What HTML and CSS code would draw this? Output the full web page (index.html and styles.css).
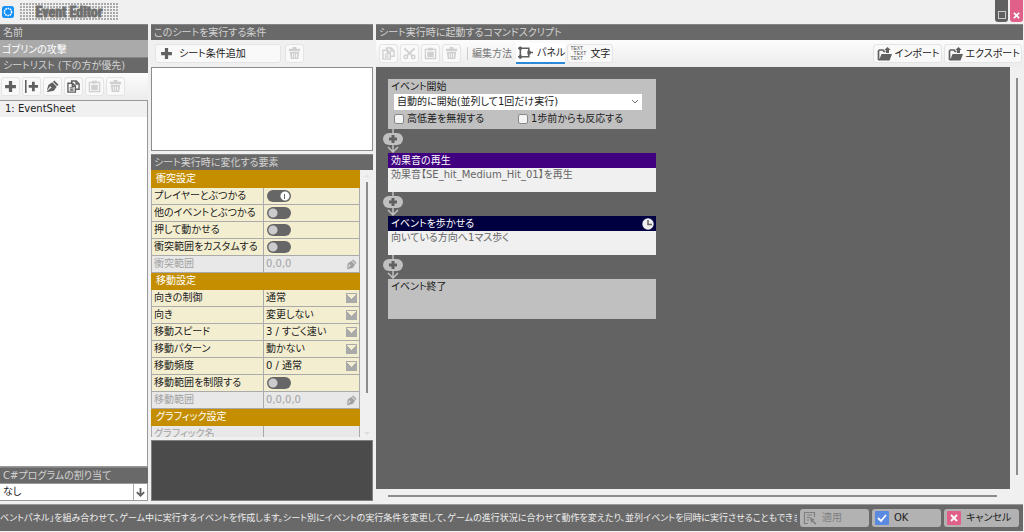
FILE: index.html
```html
<!DOCTYPE html>
<html lang="ja">
<head>
<meta charset="utf-8">
<title>Event Editor</title>
<link rel="stylesheet" href="styles.css">
</head>
<body>
<svg class="defs" aria-hidden="true">
  <symbol id="plus" viewBox="0 0 12 12"><path d="M4.500 1h3v3.500H11v3H7.500V11h-3V7.500H1v-3h3.500z"/></symbol>
  <symbol id="insert" viewBox="0 0 14 14"><path d="M0 0h1.700v14H0zM7.500 2h3v3.300H14v3h-3.500V12h-3V8.300H4v-3h3.500z"/></symbol>
  <symbol id="pen" viewBox="0 0 14 14"><path d="M9 .5 13.500 5 12 6.500 7.500 2zM6.800 2.500l4.700 4.700L8.500 11.500 1.500 13l-.5-.5 3.500-3.500a1 1 0 1 0-.8-.8L.8 11.500 2.500 5.500z"/></symbol>
  <symbol id="copy" viewBox="0 0 14 14"><path d="M5 3V1h5l3 3v6H9.500M9.700 1v3.300H13M1 3.500h5l3 3V13H1zM5.700 3.500v3.300H9M3 8.500h4M3 10.700h4" fill="none" stroke="currentColor" stroke-width="1.500"/></symbol>
  <symbol id="cut" viewBox="0 0 14 14"><path d="m1.500 1.500 8.500 8M12.500 1.500 4 9.500" fill="none" stroke="currentColor" stroke-width="2"/><circle cx="3" cy="10.800" r="1.900" fill="none" stroke="currentColor" stroke-width="1.500"/><circle cx="11" cy="10.800" r="1.900" fill="none" stroke="currentColor" stroke-width="1.500"/></symbol>
  <symbol id="paste" viewBox="0 0 14 14"><path d="M1.500 2.500h11v10h-11z" fill="none" stroke="currentColor" stroke-width="1.500"/><path d="M4.500.8h5v3h-5zM3.500 5h7v6h-7z"/></symbol>
  <symbol id="trash" viewBox="0 0 14 14"><path d="M5 0h4v2h4v2.500H1V2h4zM2 5.500h10L11 13H3zM4.300 7l.4 4.500h.8L5.300 7zm2.300 0v4.500h.8V7zm2.200 0-.2 4.500h.8L9.800 7z" fill-rule="evenodd"/></symbol>
  <symbol id="folder" viewBox="0 0 15 14"><path d="M3 12.500H1.500V4l1-1H6l1 1.500h1.500" fill="none" stroke="currentColor" stroke-width="1.700"/><path d="M4.500 7H15l-2.500 6.500H2zM10.500 0l3.200 3H12v3H9V3H7.300z"/></symbol>
  <symbol id="flow" viewBox="0 0 16 14"><path d="M2.500 0v13M0 2h11.500v9H0M11.500 6.500H16" fill="none" stroke="currentColor" stroke-width="1.700"/><path d="M1 .5h3v3H1zM1 9.500h3v3H1zM10 4.500h3.500v4H10z"/></symbol>
  <symbol id="down" viewBox="0 0 12 12"><path d="M6 1v9M2 5.500l4 4 4-4" fill="none" stroke="currentColor" stroke-width="2"/></symbol>
</svg>

<header class="titlebar">
  <svg class="app-icon" viewBox="0 0 12 12" aria-hidden="true"><rect width="12" height="12" rx="2.500" fill="#1590f5"/><circle cx="6" cy="6" r="3.600" fill="none" stroke="#fff" stroke-width="1.500" stroke-dasharray="1.600 .7"/></svg>
  <h1 class="app-name"><span>Event Editor</span></h1>
  <div class="window-buttons">
    <button class="win max" aria-label="最大化"><span></span></button>
    <button class="win close" aria-label="閉じる"><svg viewBox="0 0 8 8"><path d="m1 1 6 6M7 1 1 7" stroke="#fff" stroke-width="2"/></svg></button>
  </div>
</header>

<main class="workspace">
  <section class="col sheets">
    <label class="bar" for="name">名前</label>
    <input class="name" id="name" value="ゴブリンの攻撃">
    <h2 class="bar">シートリスト (下の方が優先)</h2>
    <div class="tools">
      <button class="tool" aria-label="追加"><svg><use href="#plus"/></svg></button>
      <button class="tool" aria-label="挿入"><svg><use href="#insert"/></svg></button>
      <button class="tool" aria-label="編集"><svg><use href="#pen"/></svg></button>
      <button class="tool" aria-label="コピー"><svg><use href="#copy"/></svg></button>
      <button class="tool" aria-label="貼り付け" disabled><svg><use href="#paste"/></svg></button>
      <button class="tool" aria-label="削除" disabled><svg><use href="#trash"/></svg></button>
    </div>
    <ul class="sheet-list"><li>1: EventSheet</li></ul>
    <label class="bar" for="program">C#プログラムの割り当て</label>
    <div class="program">
      <select id="program"><option>なし</option></select>
      <svg aria-hidden="true"><use href="#down"/></svg>
    </div>
  </section>

  <section class="col conditions">
    <h2 class="bar">このシートを実行する条件</h2>
    <div class="tools indent">
      <button class="tool add"><svg><use href="#plus"/></svg>シート条件追加</button>
      <button class="tool" aria-label="条件を削除" disabled><svg><use href="#trash"/></svg></button>
    </div>
    <div class="condition-box"></div>
    <h2 class="bar">シート実行時に変化する要素</h2>
    <div class="props">
      <table>
        <colgroup><col class="key"><col></colgroup>
        <tbody>
        <tr><th class="group" colspan="2">衝突設定</th></tr>
        <tr><th><label for="t1">プレイヤーとぶつかる</label></th><td><input class="switch" type="checkbox" id="t1" checked></td></tr>
        <tr><th><label for="t2">他のイベントとぶつかる</label></th><td><input class="switch" type="checkbox" id="t2"></td></tr>
        <tr><th><label for="t3">押して動かせる</label></th><td><input class="switch" type="checkbox" id="t3"></td></tr>
        <tr><th><label for="t4">衝突範囲をカスタムする</label></th><td><input class="switch" type="checkbox" id="t4"></td></tr>
        <tr class="off"><th>衝突範囲</th><td><div class="cell">0,0,0<svg><use href="#pen"/></svg></div></td></tr>
        <tr><th class="group" colspan="2">移動設定</th></tr>
        <tr><th><label for="s1">向きの制御</label></th><td><select class="pick" id="s1"><option>通常</option></select></td></tr>
        <tr><th><label for="s2">向き</label></th><td><select class="pick" id="s2"><option>変更しない</option></select></td></tr>
        <tr><th><label for="s3">移動スピード</label></th><td><select class="pick" id="s3"><option>3 / すごく速い</option></select></td></tr>
        <tr><th><label for="s4">移動パターン</label></th><td><select class="pick" id="s4"><option>動かない</option></select></td></tr>
        <tr><th><label for="s5">移動頻度</label></th><td><select class="pick" id="s5"><option>0 / 通常</option></select></td></tr>
        <tr><th><label for="t5">移動範囲を制限する</label></th><td><input class="switch" type="checkbox" id="t5"></td></tr>
        <tr class="off"><th>移動範囲</th><td><div class="cell">0,0,0,0<svg><use href="#pen"/></svg></div></td></tr>
        <tr><th class="group" colspan="2">グラフィック設定</th></tr>
        <tr class="off"><th>グラフィック名</th><td></td></tr>
        </tbody>
      </table>
      <div class="props-scroll"><i class="up"></i><i class="thumb"></i><i class="dn"></i></div>
    </div>
    <div class="preview"></div>
  </section>

  <section class="col script">
    <h2 class="bar">シート実行時に起動するコマンドスクリプト</h2>
    <div class="tools script-tools">
      <button class="tool" aria-label="コピー" disabled><svg><use href="#copy"/></svg></button>
      <button class="tool" aria-label="切り取り" disabled><svg><use href="#cut"/></svg></button>
      <button class="tool" aria-label="貼り付け" disabled><svg><use href="#paste"/></svg></button>
      <button class="tool" aria-label="削除" disabled><svg><use href="#trash"/></svg></button>
      <span class="mode-label">編集方法</span>
      <button class="tool mode active"><svg class="wide"><use href="#flow"/></svg>パネル</button>
      <button class="tool mode"><span class="text-icon" aria-hidden="true"><span>TEXT</span><span>TEXT</span><span>TEXT</span></span>文字</button>
      <span class="spacer"></span>
      <button class="tool file"><svg class="wide"><use href="#folder"/></svg>インポート</button>
      <button class="tool file"><svg class="wide"><use href="#folder"/></svg>エクスポート</button>
    </div>
    <div class="canvas">
      <article class="panel start">
        <h3><label for="trigger">イベント開始</label></h3>
        <div class="trigger">
          <select id="trigger"><option>自動的に開始(並列して1回だけ実行)</option></select>
          <svg viewBox="0 0 8 6" aria-hidden="true"><path d="m1 1 3 3 3-3" fill="none" stroke="#777"/></svg>
        </div>
        <div class="checks">
          <label><input type="checkbox">高低差を無視する</label>
          <label><input type="checkbox">1歩前からも反応する</label>
        </div>
      </article>
      <button class="link" aria-label="コマンドを追加"><svg viewBox="0 0 22 24"><path d="M11 0v23M6 18l5 5 5-5" fill="none" stroke="#c0c0c0" stroke-width="1.500"/><rect x="1" y="4" width="20" height="12" rx="6" fill="#c0c0c0"/><path d="M9.500 6h3v2.500H15v3h-2.500V14h-3v-2.500H7v-3h2.500z" fill="#606060"/></svg></button>
      <article class="panel command sound">
        <h3>効果音の再生</h3>
        <p>効果音【SE_hit_Medium_Hit_01】を再生</p>
      </article>
      <button class="link" aria-label="コマンドを追加"><svg viewBox="0 0 22 24"><path d="M11 0v23M6 18l5 5 5-5" fill="none" stroke="#c0c0c0" stroke-width="1.500"/><rect x="1" y="4" width="20" height="12" rx="6" fill="#c0c0c0"/><path d="M9.500 6h3v2.500H15v3h-2.500V14h-3v-2.500H7v-3h2.500z" fill="#606060"/></svg></button>
      <article class="panel command walk">
        <h3>イベントを歩かせる<svg viewBox="0 0 12 12" aria-hidden="true"><circle cx="6" cy="6" r="5.700" fill="#eee"/><path d="M6 2v4.500h4" fill="none" stroke="#666" stroke-width="1.500"/></svg></h3>
        <p>向いている方向へ1マス歩く</p>
      </article>
      <button class="link" aria-label="コマンドを追加"><svg viewBox="0 0 22 24"><path d="M11 0v23M6 18l5 5 5-5" fill="none" stroke="#c0c0c0" stroke-width="1.500"/><rect x="1" y="4" width="20" height="12" rx="6" fill="#c0c0c0"/><path d="M9.500 6h3v2.500H15v3h-2.500V14h-3v-2.500H7v-3h2.500z" fill="#606060"/></svg></button>
      <article class="panel end"><h3>イベント終了</h3></article>
    </div>
    <div class="vscroll"></div>
    <div class="hscroll"></div>
  </section>
</main>

<footer class="footer">
  <div class="help"><p>ベントパネル」を組み合わせて、ゲーム中に実行するイベントを作成します。シート別にイベントの実行条件を変更して、ゲームの進行状況に合わせて動作を変えたり、並列イベントを同時に実行させることもできま</p></div>
  <button class="action" disabled><svg viewBox="0 0 14 14"><path d="M5 12.500H1.500v-11h10V6M4 4h5M4 6.500h3M4 9h2" fill="none" stroke="currentColor" stroke-width="1.200"/><path d="m7 6 5 3-2 .6 3.500 3-1.200 1.200-3.200-3.300L8 12z"/></svg>適用</button>
  <button class="action"><svg viewBox="0 0 14 14"><rect width="14" height="14" rx="1" fill="#5b8be0"/><path d="m3 7 3 3 5-6" fill="none" stroke="#fff" stroke-width="1.800"/></svg>OK</button>
  <button class="action cancel"><svg viewBox="0 0 14 14"><rect width="14" height="14" rx="1" fill="#e0608a"/><path d="m4 4 6 6M10 4l-6 6" fill="none" stroke="#fff" stroke-width="1.800"/></svg>キャンセル</button>
</footer>
</body>
</html>
```
FILE: styles.css
```css
* { box-sizing: border-box; }
html, body { height: 100%; }
body {
  margin: 0;
  display: flex;
  flex-direction: column;
  overflow: hidden;
  background: #f0f0f0;
  color: #222;
  font: 10px/16px "DejaVu Sans", "Noto Sans CJK JP", sans-serif;
  font-feature-settings: "palt";
}
h1, h2, h3, p, ul { margin: 0; padding: 0; font-size: inherit; font-weight: normal; list-style: none; }
button, input, select {
  margin: 0; padding: 0; border: 0; border-radius: 0; background: none; color: inherit;
  font: inherit; font-feature-settings: inherit; appearance: none;
}
button { display: flex; align-items: center; white-space: nowrap; }
svg { fill: currentColor; flex: none; }
.defs { position: absolute; width: 0; height: 0; }

.titlebar { display: flex; height: 24px; flex: none; padding-left: 2px; }
.app-icon { width: 12px; height: 12px; margin-top: 6px; }
.app-name {
  height: 17px; width: 98px; margin: 3px 0 0 6px;
  background: radial-gradient(circle at 1px 1px, #aaa 1px, transparent 1px) 0 0 / 3px 3px;
  color: #707070; text-align: center;
  font: bold 14px/18px "Liberation Sans Narrow", "Roboto Condensed", "Liberation Sans", sans-serif;
}
.app-name span { -webkit-text-stroke: 1px #707070; }
.window-buttons { display: flex; gap: 2px; margin-left: auto; padding-right: 1px; }
.win { width: 13px; height: 22px; justify-content: center; align-items: flex-end; padding-bottom: 3px; border-radius: 0 0 3px 3px; background: #606060; }
.win.close { background: #e0608a; }
.win span { width: 8px; height: 8px; border: 1px solid #ccc; }
.win svg { width: 7px; height: 7px; }

.workspace {
  flex: 1; min-height: 0; display: grid;
  grid-template-columns: 148px 222px minmax(0, 1fr);
  gap: 3px; padding-right: 1px;
}
.col { display: flex; flex-direction: column; min-height: 0; }
.bar { display: block; flex: none; height: 16px; padding: 0 3px; background: #696969; color: #d2d2d2; white-space: nowrap; border-top: 1px solid #858585; }
.name { height: 17px; flex: none; padding: 0 2px; width: 100%; background: #aaa; color: #fff; }
.tools { display: flex; flex: none; align-items: center; height: 27px; gap: 2px; padding: 0 1px; background: linear-gradient(#fcfcfc, #ececec); }
.tool { justify-content: center; min-width: 19px; height: 19px; border: 1px solid #e4e4e4; border-radius: 3px; background: #f9f9f9; color: #222; }
.tool svg { width: 13px; height: 13px; color: #606060; }
.tool svg.wide { width: 15px; height: 14px; }
.tool:disabled svg { color: #d0d0d0; }
.sheet-list { flex: 1; border: 1px solid #999; border-left: 0; background: #fff; }
.sheet-list li { height: 16px; padding-left: 5px; background: #f0f0f0; }
.program { display: flex; flex: none; align-items: center; height: 18px; margin-bottom: 2px; border: 1px solid #999; border-width: 1px 1px 1px 0; background: #fff; }
.program select { flex: 1; align-self: stretch; padding-left: 3px; border-right: 1px solid #aaa; }
.program svg { width: 11px; height: 11px; margin: 0 1px; color: #606060; }

.tools.indent { padding-left: 4px; gap: 4px; background: none; }
.tool.add { width: 126px; justify-content: flex-start; padding-left: 4px; gap: 6px; }
.condition-box { height: 84px; flex: none; margin-bottom: 3px; border: 1px solid #8c8c8c; background: #fff; }
.props { flex: 1; min-height: 0; display: flex; overflow: hidden; }
.props table { width: 209px; height: 0; border-collapse: collapse; table-layout: fixed; }
.props col.key { width: 112px; }
.props tr { height: 17px; }
.props th, .props td { height: 17px; padding: 0 2px; border: 1px solid #aaa; background: #f4eed0; font-weight: normal; text-align: left; line-height: 16px; white-space: nowrap; }
.props th.group { padding-left: 4px; background: #c48e00; border-color: #c48e00; color: #fff; }
.props .off th, .props .off td { background: #e8e8e8; color: #a2a2a2; }
.cell { display: flex; justify-content: space-between; align-items: center; height: 16px; }
.cell svg { width: 11px; height: 11px; }
.switch { display: block; width: 24px; height: 12px; margin-left: 1px; border-radius: 6px; background: radial-gradient(circle at 6px 6px, #ccc 4px, transparent 5px) #666; }
.switch:checked { background: linear-gradient(#666, #666) 17px 4px / 1px 5px no-repeat, radial-gradient(circle at 18px 6px, #fff 4px, transparent 5px) #666; }
.pick { display: block; width: 100%; height: 16px; background: conic-gradient(from -45deg at 50% 100%, #f4eed0 90deg, #aaa 0) right 1px top 4px / 9px 5px no-repeat, linear-gradient(#aaa, #aaa) right 0 top 3px / 11px 10px no-repeat; }
.props-scroll { flex: 1; display: flex; flex-direction: column; align-items: center; padding: 4px 0 2px; }
.thumb { flex: none; height: 211px; width: 2px; margin-top: 5px; background: #8c8c8c; }
.up, .dn { border: 3px solid transparent; border-bottom: 3px solid #e4e4e4; border-top: 0; }
.dn { margin-top: auto; border-bottom: 0; border-top: 3px solid #ddd; }
.preview { height: 61px; flex: none; margin: 3px 0 2px; border: 1px solid #808080; background: #4b4b4b; }

.script { display: grid; grid-template: 16px 27px minmax(0, 1fr) 14px / minmax(0, 1fr) 13px; }
.script > .bar, .script-tools { grid-column: 1 / 3; }
.script-tools { padding: 0 1px 0 3px; }
.mode-label { margin-left: 4px; padding-left: 4px; border-left: 1px solid #ccc; line-height: 13px; color: #777; white-space: nowrap; }
.mode { gap: 4px; padding: 0 2px; }
.mode.active { margin-left: 2px; padding: 0 0 0 2px; border: 0; border-bottom: 2px solid #2a8ad8; border-radius: 0; background: #fff; height: 21px; }
.text-icon { display: flex; flex-direction: column; width: 16px; font: 5px/5px "Liberation Sans", sans-serif; color: #555; text-align: left; }
.text-icon span:nth-child(2) { text-align: right; }
.spacer { flex: 1; }
.file { gap: 3px; padding: 0 1px 0 3px; }
.canvas { padding: 12px; background: #636363; overflow: hidden; }
.panel { width: 268px; min-height: 39px; background: #c0c0c0; }
.panel h3 { display: flex; justify-content: space-between; align-items: center; height: 15px; padding: 0 2px 0 3px; line-height: 15px; }
.panel h3 svg { width: 12px; height: 12px; }
.start { height: 50px; }
.trigger { display: grid; align-items: center; height: 16px; margin: 0 14px 0 6px; background: #fff; }
.trigger select { grid-area: 1 / 1; padding-left: 3px; height: 16px; }
.trigger svg { grid-area: 1 / 1; justify-self: end; width: 8px; height: 6px; margin-right: 3px; }
.checks { display: grid; grid-template-columns: 124px 1fr; padding: 1px 6px 0; }
.checks label { display: flex; align-items: center; gap: 3px; }
.checks input { width: 10px; height: 10px; border: 1px solid #888; border-radius: 2px; background: #f4f4f4; }
.link { height: 24px; margin-left: -6px; }
.link svg { width: 22px; height: 24px; }
.command { background: #f0f0f0; color: #666; }
.command h3 { color: #fff; background: #400080; }
.walk h3 { background: #000040; }
.command p { padding: 0 3px; line-height: 14px; }
.end { min-height: 40px; }
.vscroll { width: 2px; margin: 11px 0 14px 6px; background: #8c8c8c; }
.hscroll { height: 2px; margin: 6px 13px 0 12px; background: #8c8c8c; }

.footer { display: flex; flex: none; align-items: center; gap: 3px; height: 27px; margin: 1px 1px 1px 0; padding-right: 4px; background: #696969; border-top: 1px solid #999; }
.help { flex: 1; min-width: 0; display: flex; overflow: hidden; color: #eee; font-size: 9px; white-space: nowrap; }
.action { width: 69px; height: 18px; gap: 5px; padding: 0 3px; border-radius: 3px; background: #b2b2b2; color: #222; }
.action.cancel { width: 75px; }
.action svg { width: 14px; height: 14px; }
.action:disabled { color: #808080; }
```
